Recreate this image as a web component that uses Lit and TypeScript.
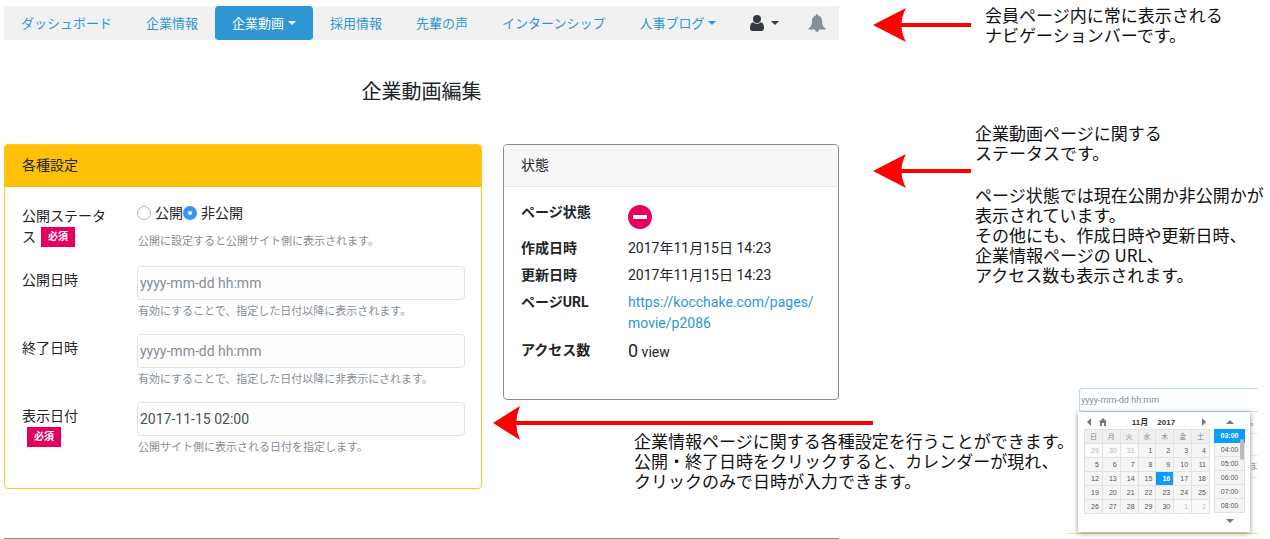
import { LitElement, html, css } from "lit";
import { customElement, property } from "lit/decorators.js";
import { classMap } from "lit/directives/class-map.js";

@customElement("note-arrow")
class NoteArrow extends LitElement {
  static styles = css`
    :host { display: flex; align-items: center; height: 34px; }
    .head { flex: none; width: 33px; height: 34px; fill: #f00; }
    :host([slim]) .head { width: 27px; }
    .shaft { flex: 1; height: 4px; margin-left: -6px; background: #f00; }
  `;
  render() {
    return html`
      <svg class="head" viewBox="0 0 33 34" preserveAspectRatio="none" aria-hidden="true">
        <path d="M0 17 33 0Q24 17 33 34Z" />
      </svg>
      <span class="shaft"></span>
    `;
  }
}

@customElement("date-picker-demo")
class DatePickerDemo extends LitElement {
  static styles = css`
    :host {
      display: block;
      position: relative;
      height: 146px;
      border-bottom: 1px solid #ffdf80;
      box-sizing: border-box;
      font-family: "Liberation Sans", "Noto Sans CJK JP", sans-serif;
    }
    .field {
      display: block;
      width: calc(100% - 12px);
      height: 24px;
      margin-left: 12px;
      box-sizing: border-box;
      border: 1px solid #b3dff5;
      border-right: 0;
      border-radius: 3px 0 0 3px;
      padding: 0 1px;
      background: #fff;
      font: 9px Roboto, sans-serif;
      color: #495057;
      outline: 0;
    }
    .field::placeholder { color: #868e96; opacity: 1; }
    .behind {
      position: absolute;
      top: 24px;
      right: 0;
      width: 8px;
      overflow: hidden;
      font-size: 8px;
      line-height: 21px;
      color: #868e96;
      text-align: left;
    }
    .behind span { display: block; height: 21px; border-bottom: 1px solid #eee; }
    .popup {
      position: absolute;
      top: 24px;
      left: 11px;
      width: 172px;
      height: 120px;
      box-sizing: border-box;
      padding: 3px 5px 0 6px;
      background: #fff;
      box-shadow: 0 1px 5px rgba(0, 0, 0, 0.45);
      display: flex;
      gap: 4px;
      font-size: 7px;
      color: #555;
    }
    .month { width: 126px; }
    .bar { display: flex; align-items: center; height: 14px; font-size: 8px; font-weight: 700; color: #333; }
    button { border: 0; padding: 0; background: none; display: flex; color: #777; }
    button svg { width: 8px; height: 8px; fill: currentColor; display: block; }
    .home { margin-left: 6px; }
    .caption { flex: 1; display: flex; justify-content: center; gap: 9px; }
    .next { margin-right: 2px; }
    .prev { margin-left: 1px; }
    table { width: 126px; border-collapse: collapse; table-layout: fixed; }
    th, td {
      height: 14px;
      box-sizing: border-box;
      padding: 0 3px 0 0;
      border: 1px solid #e2e2e2;
      background: #f5f5f5;
      text-align: right;
      line-height: 12px;
      font-weight: 400;
    }
    th { text-align: center; padding: 0; background: #f0f0f0; color: #888; }
    .other { background: #fafafa; color: #bbb; }
    .on { background: #0a9dfc; color: #fff; font-weight: 700; }
    .times { flex: 1; display: flex; flex-direction: column; align-items: center; }
    .step { height: 14px; align-items: center; }
    .scroller { position: relative; width: 100%; }
    .list {
      margin: 0;
      padding: 0;
      list-style: none;
      text-align: center;
      line-height: 13px;
    }
    .list li { height: 14px; box-sizing: border-box; border: 1px solid #e2e2e2; border-top: 0; background: #f5f5f5; }
    .list li.on { background: #0a9dfc; border-color: #0a9dfc; }
    .thumb { position: absolute; top: 10px; right: 1px; width: 4px; height: 21px; border-radius: 2px; background: #bbb; }
    .down { margin-top: 1px; }
  `;
  weeks = [
    [-29, -30, -31, 1, 2, 3, 4],
    [5, 6, 7, 8, 9, 10, 11],
    [12, 13, 14, 15, 16, 17, 18],
    [19, 20, 21, 22, 23, 24, 25],
    [26, 27, 28, 29, 30, -1, -2],
  ];
  render() {
    return html`
      <input class="field" placeholder="yyyy-mm-dd hh:mm" aria-label="公開日時" />
      <div class="behind" aria-hidden="true"><span>。</span><span></span><span>ま</span></div>
      <div class="popup">
        <div class="month">
          <div class="bar">
            <button class="prev" aria-label="前の月"><svg viewBox="0 0 8 8"><path d="M6 0v8L2 4z" /></svg></button>
            <button class="home" aria-label="今日"><svg viewBox="0 0 8 8"><path d="M4 0 8 4H7V8H5V5H3v3H1V4H0z" /></svg></button>
            <span class="caption"><span>11月</span><span>2017</span></span>
            <button class="next" aria-label="次の月"><svg viewBox="0 0 8 8"><path d="M2 0v8l4-4z" /></svg></button>
          </div>
          <table>
            <thead><tr>${["日", "月", "火", "水", "木", "金", "土"].map((d) => html`<th>${d}</th>`)}</tr></thead>
            <tbody>
              ${this.weeks.map((w) => html`<tr>${w.map((d) => html`<td class=${classMap({ other: d < 0, on: d === 16 })}>${Math.abs(d)}</td>`)}</tr>`)}
            </tbody>
          </table>
        </div>
        <div class="times">
          <button class="step" aria-label="前の時刻"><svg viewBox="0 0 8 8"><path d="M0 6h8L4 2z" /></svg></button>
          <div class="scroller">
            <ul class="list">
              ${[3, 4, 5, 6, 7, 8].map((h) => html`<li class=${classMap({ on: h === 3 })}>0${h}:00</li>`)}
            </ul>
            <span class="thumb"></span>
          </div>
          <button class="step down" aria-label="次の時刻"><svg viewBox="0 0 8 8"><path d="M0 2h8L4 6z" /></svg></button>
        </div>
      </div>
    `;
  }
}

@customElement("app-root")
class AppRoot extends LitElement {
  static styles = css`
    :host {
      display: block;
      overflow: hidden;
      background: #fff;
      color: #212529;
      font: 14px/21px Roboto, "Noto Sans CJK JP", sans-serif;
    }
    a { color: #2e97d3; text-decoration: none; }
    .page {
      display: grid;
      grid-template-columns: minmax(0, 478fr) minmax(0, 357fr) minmax(0, 431fr);
      padding: 5px 0 0 4px;
    }
    .nav {
      grid-column: 1 / 3;
      display: flex;
      height: 34px;
      margin-top: 1px;
      background: #f1f1f1;
      font-size: 13px;
    }
    .nav a { display: flex; align-items: center; gap: 4px; padding: 0 17px; white-space: nowrap; }
    .nav .active { background: #2e97d3; color: #fff; border-radius: 4px; }
    .caret { border: 4px solid transparent; border-top-color: currentColor; border-bottom: 0; }
    .nav .dark { color: #343a40; gap: 7px; padding-right: 12px; }
    .nav .bell { color: #868e96; }
    .nav svg { display: block; fill: currentColor; }
    h1 { grid-column: 1 / 3; margin: 0; padding: 34px 0 39px; font-size: 20px; line-height: 26px; font-weight: 400; text-align: center; }
    .note { display: flex; padding-left: 34px; white-space: nowrap; font: 17px/20px "Noto Sans CJK JP", sans-serif; color: #111; }
    .note p { margin: 0; }
    .note note-arrow { flex: none; width: 98px; }
    .note-nav { grid-column: 3; grid-row: 1; gap: 14px; align-items: center; }
    .note-status { grid-column: 3; grid-row: 2 / 4; align-self: start; margin-top: 78px; gap: 4px; }
    .note-status note-arrow { margin-top: 31px; }
    .note-status p + p { margin-top: 22px; }
    .note-settings { grid-column: 2 / 4; grid-row: 4; display: block; padding: 6px 0 43px 11px; }
    .note-settings note-arrow { width: 380px; }
    .note-settings p { margin: -9px 0 0 141px; }
    .card { box-sizing: border-box; border: 1px solid #868e96; border-radius: 4px; }
    h2 { margin: 0; padding: 10px 17px; border-bottom: 1px solid #e6e6e6; border-radius: 3px 3px 0 0; background: #f7f7f7; font-size: 14px; line-height: 21px; font-weight: 400; }
    .settings { grid-column: 1; grid-row: 3 / 5; align-self: start; border-color: #ffc721; }
    .settings h2 { background: #ffc107; border-color: #f5b800; }
    .form { display: grid; gap: 13px; padding: 15px 16px 31px 17px; }
    .row { display: grid; grid-template-columns: 90px minmax(0, 1fr); column-gap: 25px; }
    .title { padding-top: 4px; }
    .badge { display: inline-block; margin-left: 5px; width: 34px; line-height: 20px; background: #e5005f; color: #fff; font-size: 10px; font-weight: 700; text-align: center; vertical-align: top; }
    .text { display: block; width: 100%; height: 34px; box-sizing: border-box; padding: 0 2px; border: 1px solid #e3e3e3; border-radius: 4px; background: #fdfdfd; font: inherit; color: #495057; }
    .text::placeholder { color: #868e96; opacity: 1; }
    .hint { margin: 3px 0 0 1px; font-size: 11px; line-height: 18px; color: #868e96; }
    .choices { display: flex; align-items: center; height: 22px; margin-bottom: 9px; }
    .choices label { display: flex; align-items: center; gap: 4px; }
    .choices + .hint { margin-top: 0; margin-bottom: 2px; }
    .choices input { appearance: none; width: 14px; height: 14px; margin: 0; border: 1px solid #b5b5b5; border-radius: 50%; background: #fff; }
    .choices input:checked { border: 5px solid #3694fb; }
    .status { grid-column: 2; grid-row: 3; margin-left: 21px; }
    dl { display: grid; grid-template-columns: 107px minmax(0, 1fr); row-gap: 6px; margin: 0; padding: 15px 15px 36px 17px; }
    dt { font-weight: 700; }
    dd { margin: 0; }
    .stop { display: block; width: 24px; height: 24px; margin: 3px 0; }
    .count { font-size: 18px; }
    .picker { grid-column: 3; grid-row: 3 / 5; align-self: end; width: 191px; justify-self: end; margin-right: 12px; }
    .next-card { grid-column: 1 / 3; grid-row: 5; margin-top: 4px; border-top: 1px solid #868e96; }
  `;
  @property() menu = [
    { text: "ダッシュボード" },
    { text: "企業情報" },
    { text: "企業動画", active: true, caret: true },
    { text: "採用情報" },
    { text: "先輩の声" },
    { text: "インターンシップ" },
    { text: "人事ブログ", caret: true },
  ] as { text: string; active?: boolean; caret?: boolean }[];

  field(id: string, label: string, hint: string, value = "", required = false) {
    return html`
      <div class="row">
        <label class="title" for=${id}>${label}${required ? html`<span class="badge">必須</span>` : ""}</label>
        <div>
          <input class="text" id=${id} placeholder="yyyy-mm-dd hh:mm" .value=${value} />
          <p class="hint">${hint}</p>
        </div>
      </div>
    `;
  }

  render() {
    return html`
      <div class="page">
        <nav class="nav">
          ${this.menu.map((m) => html`<a href="#" class=${classMap({ active: !!m.active })}>${m.text}${m.caret ? html`<span class="caret"></span>` : ""}</a>`)}
          <a href="#" class="dark" aria-label="アカウント">
            <svg width="14" height="16" viewBox="0 0 14 16"><circle cx="7" cy="4" r="4" /><path d="M3 7.2Q7 10.5 11 7.2Q14 8 14 13Q14 16 11.500 16H2.500Q0 16 0 13Q0 8 3 7.200Z" /></svg>
            <span class="caret"></span>
          </a>
          <a href="#" class="bell" aria-label="お知らせ">
            <svg width="18" height="18" viewBox="0 0 18 18"><path d="M9 0Q10.200 0 10.200 1.500Q14 2.600 14 7Q14 12.500 17.500 14.500V15.500H11Q10.800 18 9 18Q7.200 18 7 15.500H.5V14.500Q4 12.500 4 7Q4 2.600 7.800 1.500Q7.800 0 9 0Z" /></svg>
          </a>
        </nav>
        <aside class="note note-nav">
          <note-arrow></note-arrow>
          <p>会員ページ内に常に表示される<br />ナビゲーションバーです。</p>
        </aside>
        <h1>企業動画編集</h1>
        <section class="card settings">
          <h2>各種設定</h2>
          <form class="form">
            <div class="row" role="radiogroup" aria-labelledby="state">
              <span class="title" id="state">公開ステータス<span class="badge">必須</span></span>
              <div>
                <div class="choices">
                  <label><input type="radio" name="state" />公開</label>
                  <label><input type="radio" name="state" checked />非公開</label>
                </div>
                <p class="hint">公開に設定すると公開サイト側に表示されます。</p>
              </div>
            </div>
            ${this.field("open", "公開日時", "有効にすることで、指定した日付以降に表示されます。")}
            ${this.field("close", "終了日時", "有効にすることで、指定した日付以降に非表示にされます。")}
            ${this.field("shown", "表示日付", "公開サイト側に表示される日付を指定します。", "2017-11-15 02:00", true)}
          </form>
        </section>
        <section class="card status">
          <h2>状態</h2>
          <dl>
            <dt>ページ状態</dt>
            <dd><svg class="stop" viewBox="0 0 24 24" role="img" aria-label="非公開"><circle cx="12" cy="12" r="12" fill="#e5005f" /><rect x="5" y="10" width="14" height="4" rx="1" fill="#fff" /></svg></dd>
            <dt>作成日時</dt>
            <dd>2017年11月15日 14:23</dd>
            <dt>更新日時</dt>
            <dd>2017年11月15日 14:23</dd>
            <dt>ページURL</dt>
            <dd><a href="#">https://kocchake.com/pages/<wbr />movie/p2086</a></dd>
            <dt>アクセス数</dt>
            <dd><span class="count">0</span> view</dd>
          </dl>
        </section>
        <aside class="note note-status">
          <note-arrow></note-arrow>
          <div>
            <p>企業動画ページに関する<br />ステータスです。</p>
            <p>ページ状態では現在公開か非公開かが<br />表示されています。<br />その他にも、作成日時や更新日時、<br />企業情報ページの URL、<br />アクセス数も表示されます。</p>
          </div>
        </aside>
        <aside class="note note-settings">
          <note-arrow slim></note-arrow>
          <p>企業情報ページに関する各種設定を行うことができます。<br />公開・終了日時をクリックすると、カレンダーが現れ、<br />クリックのみで日時が入力できます。</p>
        </aside>
        <date-picker-demo class="picker"></date-picker-demo>
        <div class="next-card"></div>
      </div>
    `;
  }
}
